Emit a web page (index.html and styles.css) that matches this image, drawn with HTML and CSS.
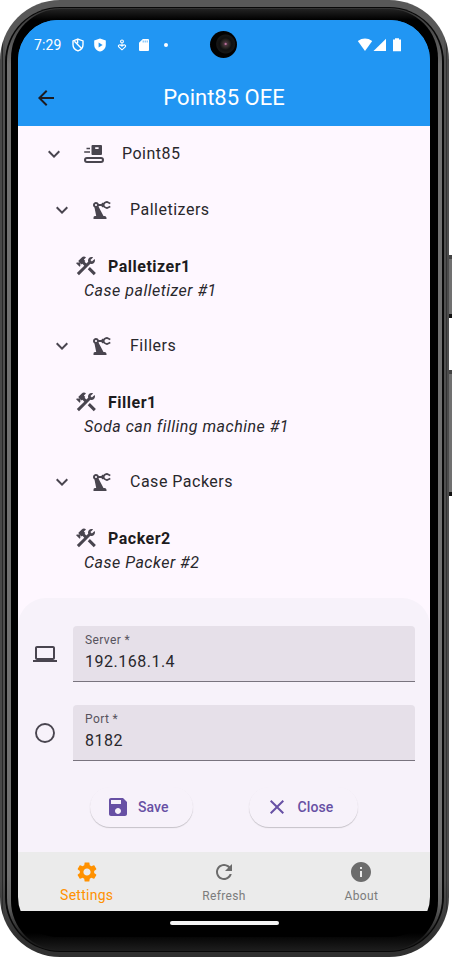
FILE: index.html
```html
<!DOCTYPE html>
<html lang="en">
<head>
<meta charset="utf-8">
<title>Point85 OEE</title>
<link rel="stylesheet" href="styles.css">
</head>
<body>
<svg class="defs" width="0" height="0">
  <symbol id="chevron" viewBox="0 0 24 24"><path d="M16.59 8.59L12 13.17 7.41 8.59 6 10l6 6 6-6z"/></symbol>
  <symbol id="robot" viewBox="0 0 24 24"><path fill-rule="evenodd" d="M12 6H8.82C8.4 4.84 7.3 4 6 4 4.34 4 3 5.34 3 7c0 1.1.6 2.05 1.48 2.58L6.2 18H5c-1.1 0-1.5.9-1.5 2v1h13v-1c0-1.1-.9-2-2-2h-1L8.61 8.77c.1-.24.17-.49.21-.77H12zM6 8c-.55 0-1-.45-1-1s.45-1 1-1 1 .45 1 1-.45 1-1 1z"/><rect x="11.6" y="4.8" width="2.4" height="4.4" rx="1"/><path fill="none" stroke="#49454f" stroke-width="1.6" d="M20.3 5.4L17 3.9Q13.8 4.4 13.6 7Q13.8 9.6 17 10.1L20.3 8.6"/></symbol>
  <symbol id="tools" viewBox="0 0 24 24"><path d="M13.78 15.17l2.12-2.12 6 6-2.12 2.12z"/><path d="M17.5 10c1.93 0 3.5-1.57 3.5-3.5 0-.58-.16-1.12-.41-1.6l-2.7 2.7-1.49-1.49 2.7-2.7c-.48-.25-1.02-.41-1.6-.41C15.57 3 14 4.57 14 6.5c0 .41.08.8.21 1.16l-1.85 1.85-1.78-1.78.71-.71-1.41-1.41L12 3.49c-1.17-1.17-3.07-1.17-4.24 0L4.22 7.03l1.41 1.41H2.81l-.71.71 3.54 3.54.71-.71V9.15l1.41 1.41.71-.71 1.78 1.78-7.41 7.41 2.12 2.12L16.34 9.79c.36.13.75.21 1.16.21z"/></symbol>
</svg>
<div class="device">
  <div class="phone"><div class="seam"><div class="rim"><div class="bezel">
    <div class="screen">
      <header class="top">
        <div class="status">
          <span class="clock">7:29</span>
          <svg class="st shield" width="14" height="14" viewBox="0 0 14 14" fill="none" stroke="#fff" stroke-width="1.4"><path d="M7 1.1L12 2.9V6.8C12 9.8 9.8 12 7 12.9C4.2 12 2 9.8 2 6.8V2.9Z"/><path d="M3.4 3.2L10.6 10.6M6.6 2V5.3"/></svg>
          <svg class="st play" width="14" height="14" viewBox="0 0 14 14"><path fill="#fff" d="M7 .4L12.8 2.6V6.8C12.8 10.3 10.3 12.8 7 13.6C3.7 12.8 1.2 10.3 1.2 6.8V2.6Z"/><path fill="#2196f3" d="M5.6 4.4L9.6 7L5.6 9.6Z"/></svg>
          <svg class="st heart" width="10" height="12" viewBox="0 0 10 12" fill="none" stroke="#fff" stroke-width="1.1"><circle cx="5" cy="2.4" r="1.4"/><path d="M5 4.2V7.4M5 10.8L2 8.1C.3 6.6 2.3 4.6 5 7.2C7.7 4.6 9.7 6.6 8 8.1Z"/></svg>
          <svg class="st card" width="12" height="14" viewBox="0 0 12 14"><path fill="#fff" d="M4.8 1H10Q11 1 11 2V12Q11 13 10 13H2Q1 13 1 12V4.8Z"/><path stroke="#2196f3" stroke-width=".7" d="M5.2 2.5V4.5M7.2 2.5V4.5M9.2 2.5V4.5"/></svg>
          <span class="dot"></span>
          <svg class="signals" width="46" height="14" viewBox="0 0 46 14" fill="#fff"><path d="M.8 3Q8 -1.8 15.2 3L8 13Z"/><path d="M29 .8V13H16.5Z"/><path d="M36 1.6H38V.3H42V1.6H44V13.2H36Z"/></svg>
          <span class="camera"></span>
        </div>
        <div class="appbar">
          <svg class="back" width="24" height="24" viewBox="0 0 24 24"><path fill="#1d1b20" d="M20 11H7.83l5.59-5.59L12 4l-8 8 8 8 1.41-1.41L7.83 13H20v-2z"/></svg>
          <h1>Point85 OEE</h1>
        </div>
      </header>
      <main class="tree">
        <div class="row root">
          <svg class="icon"><use href="#chevron"/></svg>
          <svg class="icon kind" viewBox="0 0 24 24"><path fill-rule="evenodd" d="M10 3H19Q20 3 20 4V12Q20 13 19 13H10.5Q9.5 13 9.5 12V4Q9.500 3 10.500 3ZM13.200 5.300V7.100H16.600V5.300ZM4.500 5.800H8V7.300H4.500ZM2.200 9.200H8V10.700H2.200ZM5 15H19Q22 15 22 18T19 21H5Q2 21 2 18T5 15ZM5 17Q4 17 4 18T5 19H19Q20 19 20 18T19 17Z"/></svg>
          <span>Point85</span>
        </div>
        <div class="row"><svg class="icon"><use href="#chevron"/></svg><svg class="icon kind"><use href="#robot"/></svg><span>Palletizers</span></div>
        <div class="leaf"><div class="name"><svg class="icon"><use href="#tools"/></svg><b>Palletizer1</b></div><i>Case palletizer #1</i></div>
        <div class="row"><svg class="icon"><use href="#chevron"/></svg><svg class="icon kind"><use href="#robot"/></svg><span>Fillers</span></div>
        <div class="leaf"><div class="name"><svg class="icon"><use href="#tools"/></svg><b>Filler1</b></div><i>Soda can filling machine #1</i></div>
        <div class="row"><svg class="icon"><use href="#chevron"/></svg><svg class="icon kind"><use href="#robot"/></svg><span>Case Packers</span></div>
        <div class="leaf"><div class="name"><svg class="icon"><use href="#tools"/></svg><b>Packer2</b></div><i>Case Packer #2</i></div>
      </main>
      <section class="sheet">
        <div class="fieldrow">
          <svg class="icon" viewBox="0 0 24 24"><path d="M20 18c1.1 0 1.99-.9 1.99-2L22 6c0-1.1-.9-2-2-2H4c-1.1 0-2 .9-2 2v10c0 1.1.9 2 2 2H0v2h24v-2h-4zM4 6h16v10H4V6z"/></svg>
          <div class="field"><label>Server *</label><div class="value">192.168.1.4</div></div>
        </div>
        <div class="fieldrow">
          <svg class="icon" viewBox="0 0 24 24"><circle cx="12" cy="12" r="9" fill="none" stroke="#49454f" stroke-width="1.9"/></svg>
          <div class="field"><label>Port *</label><div class="value">8182</div></div>
        </div>
        <div class="actions">
          <div class="btn save"><svg class="icon" viewBox="0 0 24 24"><path d="M17 3H5c-1.11 0-2 .9-2 2v14c0 1.1.89 2 2 2h14c1.1 0 2-.9 2-2V7l-4-4zm-5 16c-1.66 0-3-1.34-3-3s1.34-3 3-3 3 1.34 3 3-1.34 3-3 3zm3-10H5V5h10v4z"/></svg>Save</div>
          <div class="btn close"><svg class="icon" viewBox="0 0 24 24"><path d="M19 6.41L17.59 5 12 10.59 6.41 5 5 6.41 10.59 12 5 17.59 6.41 19 12 13.41 17.59 19 19 17.59 13.41 12z"/></svg>Close</div>
        </div>
      </section>
      <nav class="nav">
        <div class="tab active"><svg viewBox="0 0 24 24"><path d="M19.14 12.94c.04-.3.06-.61.06-.94 0-.32-.02-.64-.07-.94l2.03-1.58c.18-.14.23-.41.12-.61l-1.92-3.32c-.12-.22-.37-.29-.59-.22l-2.39.96c-.5-.38-1.03-.7-1.62-.94l-.36-2.54c-.04-.24-.24-.41-.48-.41h-3.84c-.24 0-.43.17-.47.41l-.36 2.54c-.59.24-1.13.57-1.62.94l-2.39-.96c-.22-.08-.47 0-.59.22L2.74 8.87c-.12.21-.08.47.12.61l2.03 1.58c-.05.3-.09.63-.09.94s.02.64.07.94l-2.03 1.58c-.18.14-.23.41-.12.61l1.92 3.32c.12.22.37.29.59.22l2.39-.96c.5.38 1.03.7 1.62.94l.36 2.54c.05.24.24.41.48.41h3.84c.24 0 .44-.17.47-.41l.36-2.54c.59-.24 1.13-.56 1.62-.94l2.39.96c.22.08.47 0 .59-.22l1.92-3.32c.12-.22.07-.47-.12-.61l-2.01-1.58zM12 15.6c-1.98 0-3.6-1.62-3.6-3.6s1.62-3.6 3.6-3.6 3.6 1.62 3.6 3.6-1.62 3.6-3.6 3.6z"/></svg><span>Settings</span></div>
        <div class="tab"><svg viewBox="0 0 24 24"><path d="M17.65 6.35C16.2 4.9 14.21 4 12 4c-4.42 0-7.99 3.58-7.99 8s3.57 8 7.99 8c3.73 0 6.84-2.55 7.73-6h-2.08c-.82 2.33-3.04 4-5.65 4-3.31 0-6-2.69-6-6s2.69-6 6-6c1.66 0 3.14.69 4.22 1.78L13 11h7V4l-2.35 2.35z"/></svg><span>Refresh</span></div>
        <div class="tab"><svg viewBox="0 0 24 24"><path d="M12 2C6.48 2 2 6.48 2 12s4.48 10 10 10 10-4.48 10-10S17.52 2 12 2zm1 15h-2v-6h2v6zm0-8h-2V7h2v2z"/></svg><span>About</span></div>
      </nav>
      <div class="gesture"><span></span></div>
    </div>
  </div></div></div></div>
  <div class="keys"><span class="power"></span><span class="volume"></span></div>
</div>
</body>
</html>
```
FILE: styles.css
```css
* { box-sizing: border-box; }
body { margin: 0; background: #fff; font-family: Roboto, "Liberation Sans", sans-serif; color: #29272c; overflow: hidden; }
.defs { display: block; }
svg { display: block; flex: none; }

.device { display: flex; width: 452px; height: 957px; }
.phone {
  width: 449px; height: 957px; padding: 7px 5px 5px; border-radius: 60px;
  background: linear-gradient(transparent 880px, #303030 935px),
    linear-gradient(to right, #484848 0 2px, #292929 2px 3px, #505050 3px 5px, transparent 5px 444px, #505050 444px 446px, #333 446px 447px, #4c4c4c 447px),
    #585858;
}
.seam { height: 100%; padding: 1px 2px; border-radius: 55px; background: #080808; }
.rim { height: 100%; padding: 1px 4px; border-radius: 53px; background: linear-gradient(#333, #707070 6%, #707070 92%, #666 95%, #1c1c1c 98.5%); }
.bezel { height: 100%; padding: 11px 8px 13px 7px; border-radius: 49px; background: linear-gradient(#222 0, #000 11px, #000 924px, #1c1c1c 100%); }
.screen { width: 412px; height: 917px; border-radius: 40px; overflow: hidden; background: linear-gradient(#2196f3 60px, #fef7ff 60px 860px, #000 860px); display: flex; flex-direction: column; }

.keys { width: 3px; padding-top: 255px; }
.keys span { display: block; width: 3px; background: #707070; border-top: 4px solid #444; border-bottom: 4px solid #111; }
.power { height: 63px; margin-bottom: 52px; }
.volume { height: 126px; }

.top { height: 106px; background: #2196f3; color: #fff; }
.status { position: relative; height: 50px; display: flex; align-items: center; padding-left: 16px; }
.clock { width: 37px; font-size: 14px; letter-spacing: .1px; }
.play { margin-left: 8px; }
.heart { margin-left: 10px; }
.card { margin-left: 11px; }
.dot { width: 4px; height: 4px; margin-left: 14px; border-radius: 50%; background: #fff; }
.signals { margin-left: auto; margin-right: 27px; }
.camera { position: absolute; left: 192px; top: 11px; width: 27px; height: 27px; border-radius: 50%; background: radial-gradient(circle at 58% 48%, #b8709a 0 .6px, #49343d 1.6px, #292522 4px, #101010 6px, #161616 9px, #020202 10px); }
.appbar { height: 56px; display: grid; grid-template-columns: 56px 1fr 56px; align-items: center; }
.back { margin-left: 16px; width: 24px; height: 24px; }
.appbar h1 { margin: 0; text-align: center; font-size: 22px; font-weight: 400; line-height: 28px; }

.tree { height: 472px; }
.icon { width: 24px; height: 24px; fill: #49454f; }
.row { height: 56px; display: flex; align-items: center; padding-left: 32px; font-size: 16px; letter-spacing: .5px; }
.row.root { padding-left: 24px; }
.row span { line-height: 20px; padding-bottom: 1px; }
.kind { margin-left: 16px; margin-right: 16px; }
.leaf { height: 80px; padding: 16px 0 0 56px; font-size: 16px; letter-spacing: .5px; line-height: 24px; }
.name { display: flex; align-items: center; gap: 10px; height: 24px; }
.name b { font-weight: 700; line-height: 22px; padding-top: 2px; color: #1d1b20; }
.leaf i { display: block; padding: 1px 0 0 10px; }

.sheet { height: 254px; padding: 28px 15px 0; background: #f7f2fa; border-radius: 28px 28px 0 0; }
.fieldrow { display: flex; align-items: center; gap: 16px; margin-bottom: 22.5px; }
.fieldrow .icon { margin-left: -.5px; margin-right: .5px; }
.field { flex: 1; height: 56px; padding: 5px 12px 0; border-radius: 4px 4px 0 0; border-bottom: 1px solid #79747e; background: #e6e0e9; }
.field label { display: block; font-size: 12px; line-height: 18px; letter-spacing: .4px; color: #57535d; }
.field .value { font-size: 16px; line-height: 26px; letter-spacing: .5px; }
.actions { display: flex; padding-left: 57px; gap: 56px; margin-top: 26px; }
.btn { height: 40px; display: flex; align-items: center; gap: 8px; padding-left: 16px; border-radius: 20px; background: #f7f2fa; color: #6750a4; font-size: 14px; font-weight: 500; letter-spacing: .1px; box-shadow: 0 1px 1px rgba(0,0,0,.2); }
.btn .icon { fill: #6750a4; }
.save { width: 103px; }
.close { width: 109px; }
.close .icon { margin-right: .5px; }

.nav { height: 59px; display: flex; background: #ebebeb; color: #7c7c7c; }
.tab { flex: 1; display: flex; flex-direction: column; align-items: center; padding-top: 8px; font-size: 12px; letter-spacing: .35px; }
.tab svg { width: 24px; height: 24px; fill: #6c6c6c; }
.tab span { line-height: 20px; margin-top: 2px; }
.tab.active { color: #ff9100; font-size: 14px; letter-spacing: .25px; }
.tab.active svg { fill: #ff9100; }
.tab.active span { margin-top: 1px; }
.gesture { height: 26px; background: #000; padding-top: 10px; }
.gesture span { display: block; width: 109px; height: 4px; margin: 0 auto; border-radius: 2px; background: #f4f4f4; }
```
